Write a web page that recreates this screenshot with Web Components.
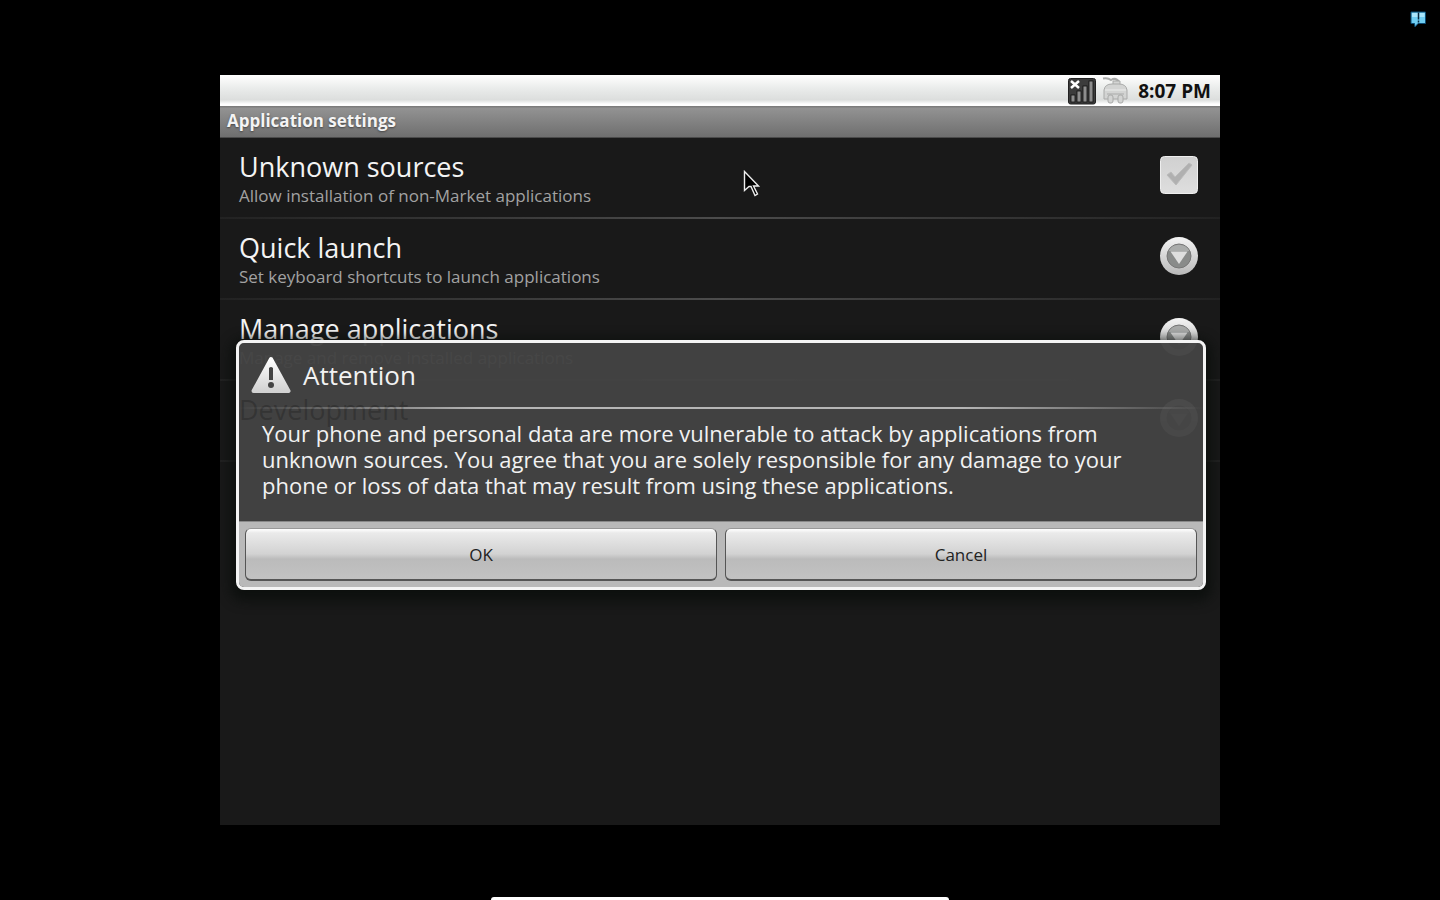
<!DOCTYPE html>
<html lang="en">
<head>
<meta charset="utf-8">
<title>Application settings</title>
<style>
body {
	margin: 0;
	background: #000;
	font-family: "Open Sans", "Noto Sans", sans-serif;
}
</style>
</head>
<body>

<desktop-shell>
	<chat-badge slot="tray"></chat-badge>
	<phone-screen>
		<status-bar slot="status" time="8:07 PM"></status-bar>
		<title-bar>Application settings</title-bar>
		<setting-row kind="check">
			Unknown sources
			<span slot="summary">Allow installation of non-Market applications</span>
		</setting-row>
		<setting-row>
			Quick launch
			<span slot="summary">Set keyboard shortcuts to launch applications</span>
		</setting-row>
		<setting-row>
			Manage applications
			<span slot="summary">Manage and remove installed applications</span>
		</setting-row>
		<setting-row class="faded">Development</setting-row>
		<alert-dialog slot="overlay" heading="Attention">
			Your phone and personal data are more vulnerable to attack by applications from unknown sources. You agree that you are solely responsible for any damage to your phone or loss of data that may result from using these applications.
			<dialog-button slot="buttons">OK</dialog-button>
			<dialog-button slot="buttons">Cancel</dialog-button>
		</alert-dialog>
		<mouse-pointer slot="overlay"></mouse-pointer>
	</phone-screen>
</desktop-shell>

<script>
// Shared base: fills an open shadow root from the class's static html
class Part extends HTMLElement {
	constructor() {
		super();
		this.attachShadow({mode: "open"});
	}

	connectedCallback() {
		this.shadowRoot.innerHTML = this.constructor.html;
	}
}

customElements.define("desktop-shell", class extends Part {
	static html = `
<style>
:host {
	display: grid;
	grid-template-rows: 75px 1fr 75px;
	min-height: 100vh;
	overflow: hidden;
}
header {
	display: flex;
	justify-content: flex-end;
	padding: 11px 13px;
}
main {
	display: grid;
	padding: 0 220px;
}
footer {
	display: flex;
	justify-content: center;
	align-items: flex-end;
}
.dock {
	width: 458px;
	height: 3px;
	border-radius: 6px 6px 0 0;
	background: #fff;
}
</style>
<header><slot name="tray"></slot></header>
<main><slot></slot></main>
<footer><div class="dock"></div></footer>
`;
});

customElements.define("chat-badge", class extends Part {
	static html = `
<style>
:host { display: block; }
svg { display: block; }
</style>
<svg width="17" height="17" viewBox="0 0 17 17">
	<path d="M1 1h14.500v11.500H8L5 16 4.500 12.500H1z" fill="#6fcdf2" stroke="#0b4a73"/>
	<path d="M2 2h12.500v4H2z" fill="#a9e5fb"/>
	<path d="M8.500 1.500v7M8.500 9.500v2" stroke="#06263c" stroke-width="1.500"/>
</svg>
`;
});

customElements.define("phone-screen", class extends Part {
	static html = `
<style>
:host {
	display: flex;
	flex-direction: column;
	background: #191919;
}
.window {
	position: relative;
	flex: 1;
}
.overlay {
	position: absolute;
	inset: 0;
	display: grid;
	align-items: center;
	padding: 0 14px 1px 16px;
}
</style>
<slot name="status"></slot>
<div class="window">
	<slot></slot>
	<div class="overlay"><slot name="overlay"></slot></div>
</div>
`;
});

customElements.define("status-bar", class extends Part {
	static html = `
<style>
:host {
	display: flex;
	justify-content: flex-end;
	align-items: center;
	gap: 6px;
	height: 31px;
	padding-right: 9px;
	background: linear-gradient(#fff, #e9ebea 45%, #dcdedd 80%, #fff 94%);
	color: #111;
	font-size: 19px;
	font-weight: 700;
}
svg { display: block; }
time { margin-left: 3px; }
</style>
<svg width="28" height="28" viewBox="0 0 28 28">
	<defs>
		<linearGradient id="bar" x2="1"><stop stop-color="#ddd"/><stop offset="1" stop-color="#777"/></linearGradient>
	</defs>
	<rect x="0.500" y="1.500" width="27" height="25.500" rx="2" fill="#3c3c3c" stroke="#222"/>
	<g fill="#8d8d8d" stroke="#111" stroke-width="0.800">
		<rect x="3" y="18" width="4" height="7"/>
		<rect x="9" y="14" width="4" height="11"/>
		<rect x="15" y="9" width="4" height="16"/>
		<rect x="21" y="4" width="4" height="21"/>
	</g>
	<path d="M3 4l8 7M11 4l-8 7" stroke="#fff" stroke-width="2.500"/>
</svg>
<svg width="27" height="29" viewBox="0 0 27 29">
	<g stroke="#a9aaa9" fill="#d3d4d3">
		<path d="M1 2.500q5-1 8 1.500 5-3 8 2" fill="none" stroke-width="2"/>
		<path d="M11 5h7v4h-7z"/>
		<path d="M2 14q1-6 8-6h7q7 0 8 6v9H2z"/>
		<path d="M3 14h21" stroke="#ecedec" fill="none"/>
		<path d="M5 18h17" fill="none"/>
		<rect x="6" y="19" width="5" height="8" rx="2"/>
		<rect x="16" y="19" width="5" height="8" rx="2"/>
	</g>
</svg>
<time></time>
`;

	connectedCallback() {
		super.connectedCallback();
		this.shadowRoot.querySelector("time").textContent = this.getAttribute("time");
	}
});

customElements.define("title-bar", class extends Part {
	static html = `
<style>
:host {
	display: block;
	height: 32px;
	padding: 0 7px;
	box-sizing: border-box;
	background: linear-gradient(#777 0, #929292 8%, #6f6f6f 96%, #333);
	color: #f4f4f4;
	font-size: 17px;
	font-weight: 700;
	line-height: 30px;
	text-shadow: 0 1px 2px #444;
}
h1 { margin: 0; font: inherit; }
</style>
<h1><slot></slot></h1>
`;
});

const CHECK = `
<svg width="40" height="40" viewBox="0 0 40 40">
	<defs><linearGradient id="face" x2="0" y2="1"><stop stop-color="#d0d0d0"/><stop offset="1" stop-color="#dedede"/></linearGradient></defs>
	<rect x="1.500" y="1.500" width="37" height="37" rx="4" fill="url(#face)" stroke="#eee"/>
	<path d="M8 20l4-3 4 5L30 8l3 2-16 20z" fill="#b0b0b0" stroke="#bbb"/>
</svg>`;

const ARROW = `
<svg width="40" height="40" viewBox="0 0 40 40">
	<defs><linearGradient id="face" x2="0" y2="1"><stop stop-color="#f4f4f4"/><stop offset="1" stop-color="#b9b9b9"/></linearGradient></defs>
	<circle cx="20" cy="20" r="19" fill="url(#face)"/>
	<circle cx="20" cy="20" r="12" fill="#898b8a" stroke="#777"/>
	<path d="M9.500 15a12 12 0 0 1 21 0z" fill="#aaacab"/>
	<path d="M11.500 15.500h17L20 28z" fill="#dedede"/>
</svg>`;

customElements.define("setting-row", class extends Part {
	static html = `
<style>
:host { display: block; }
label, button {
	all: unset;
	display: flex;
	justify-content: space-between;
	width: 100%;
	height: 81px;
	box-sizing: border-box;
	padding: 13px 21px 0 19px;
	border-bottom: 2px solid;
	border-image: linear-gradient(90deg, #222, #4c4c4c 50%, #222) 1;
}
.text { display: block; }
.title {
	display: block;
	color: #f4f4f4;
	font-size: 27px;
	line-height: 32px;
}
/* title shows through the dialog as a dark ghost */
:host(.faded) .title {
	position: relative;
	z-index: 1;
	color: rgb(0 0 0 / .2);
}
.summary {
	display: block;
	color: #a2a2a2;
	font-size: 17px;
	line-height: 26px;
}
.widget {
	display: grid;
	align-content: start;
	padding-top: 4px;
}
.widget > * { grid-area: 1 / 1; }
input {
	appearance: none;
	width: 40px;
	height: 40px;
	margin: 0;
}
svg { display: block; }
</style>
`;

	connectedCallback() {
		super.connectedCallback();
		let check = this.getAttribute("kind") == "check";
		let tag = check ? "label" : "button";
		this.shadowRoot.innerHTML += `
<${tag}>
	<span class="text">
		<span class="title"><slot></slot></span>
		<span class="summary"><slot name="summary"></slot></span>
	</span>
	<span class="widget">${check ? CHECK + `<input type="checkbox">` : ARROW}</span>
</${tag}>`;
	}
});

customElements.define("alert-dialog", class extends Part {
	static html = `
<style>
:host {
	display: block;
	box-sizing: border-box;
	border: 3px solid #f4f4f4;
	border-radius: 8px;
	background: rgb(67 67 67 / .96);
	background-clip: padding-box;
	box-shadow: 0 5px 12px 6px rgb(9 13 11 / .75);
	color: #f2f2f2;
	overflow: hidden;
}
header {
	display: flex;
	align-items: center;
	gap: 12px;
	height: 66px;
	box-sizing: border-box;
	padding: 0 12px;
	border-bottom: 2px solid;
	border-image: linear-gradient(90deg, transparent, #b5b5b5 25%, #b5b5b5 75%, transparent) 1;
}
h2 {
	margin: 0;
	font-size: 26px;
	font-weight: 400;
	line-height: 32px;
}
p {
	margin: 0;
	padding: 11px 60px 23px 23px;
	font-size: 22px;
	line-height: 26px;
}
footer {
	display: flex;
	gap: 8px;
	padding: 6px;
	border-top: 1px solid #8a8a8a;
	background: #b9b9b9;
}
svg { display: block; }
</style>
<header>
	<svg width="40" height="38" viewBox="0 0 40 38">
		<defs><linearGradient id="sign" x2="0" y2="1"><stop stop-color="#fff"/><stop offset="1" stop-color="#d2d2d2"/></linearGradient></defs>
		<path d="M20 3L37.500 35h-35z" fill="url(#sign)" stroke="url(#sign)" stroke-width="4" stroke-linejoin="round"/>
		<path d="M18 12q2-2 4 0v12h-4z" fill="#444"/>
		<circle cx="20" cy="29" r="3" fill="#444"/>
	</svg>
	<h2></h2>
</header>
<p><slot></slot></p>
<footer><slot name="buttons"></slot></footer>
`;

	connectedCallback() {
		super.connectedCallback();
		this.shadowRoot.querySelector("h2").textContent = this.getAttribute("heading");
	}
});

customElements.define("dialog-button", class extends Part {
	static html = `
<style>
:host {
	display: block;
	flex: 1;
}
button {
	display: block;
	width: 100%;
	height: 53px;
	border: 1px solid #555;
	border-top-color: #999;
	border-bottom-width: 2px;
	border-radius: 6px;
	background: linear-gradient(#fff 0, #eaeaea 8%, #d2d2d2 50%, #bbb 60%, #c2c2c2);
	color: #222;
	font-family: inherit;
	font-size: 17px;
}
</style>
<button type="button"><slot></slot></button>
`;
});

customElements.define("mouse-pointer", class extends Part {
	static html = `
<style>
:host {
	position: absolute;
	left: 523px;
	top: 64px;
}
svg { display: block; }
</style>
<svg width="18" height="28" viewBox="0 0 18 28">
	<path d="M1.500 1.500v19l4.500-4h2l4 9 2.500-1.500-4-8h5z" fill="#000" stroke="#eee" stroke-width="1.400"/>
</svg>
`;
});
</script>
</body>
</html>
